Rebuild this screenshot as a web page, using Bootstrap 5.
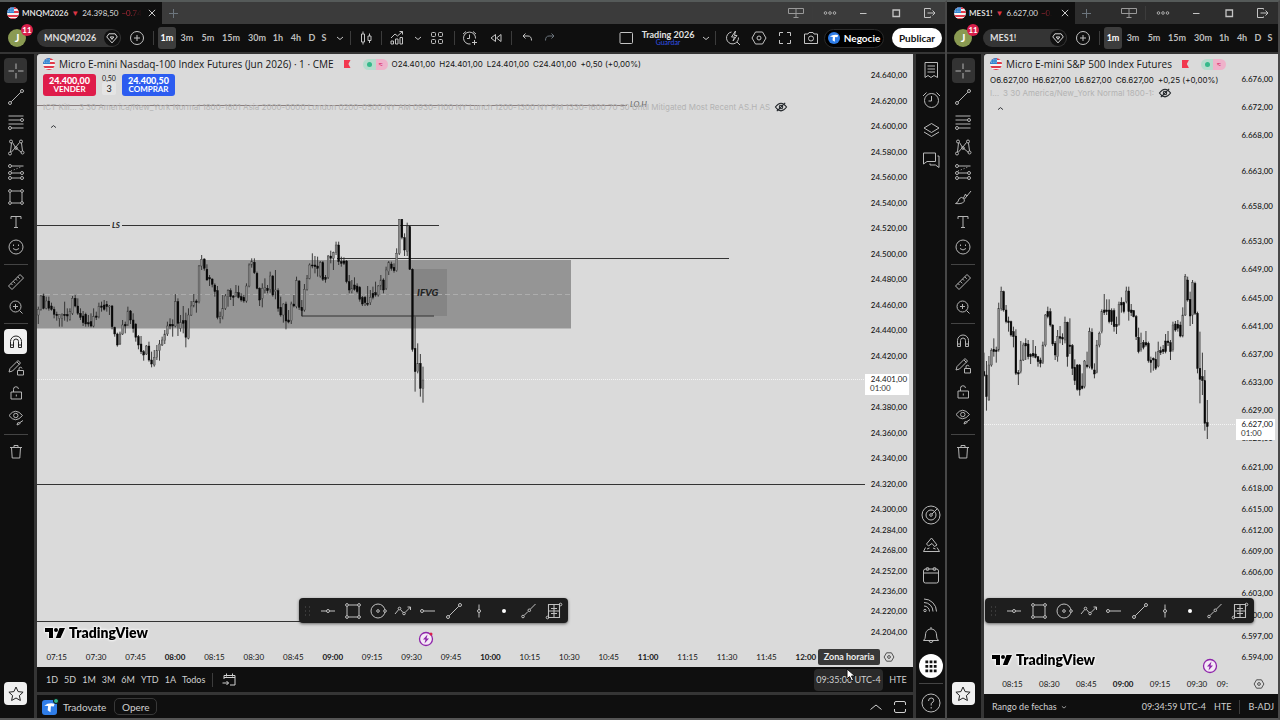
<!DOCTYPE html>
<html lang="es">
<head>
<meta charset="utf-8">
<meta name="viewport" content="width=device-width, initial-scale=1">
<title>MNQM2026 24.398,50</title>
<link href="https://cdn.jsdelivr.net/npm/bootstrap@5.3.0/dist/css/bootstrap.min.css" rel="stylesheet">
<style>
:root{--bg:#0f0f0f;--line:#353535;--ink:#c4c4c4;--paper:#dadada}
body{height:100vh;min-height:640px;background:var(--bg);color:var(--ink);font:8px/10px Lato,"Open Sans",sans-serif;overflow:hidden}
button{background:none;border:0;padding:0;color:inherit;font:inherit;display:flex;align-items:center;justify-content:center;flex-shrink:0}
svg{flex-shrink:0}
.ic{width:20px;height:20px;fill:none;stroke:currentColor;stroke-width:1}
.ic-s{width:14px;height:14px}
.caret{width:9px;height:9px;stroke-width:2}
.win-a{flex:948 1 0}
.win-b{flex:332 1 0}
.win{min-width:0;border-top:2px solid #555a59;border-right:2px solid #484848;border-bottom:2px solid #555}
.tabs{height:22px;background:#3b3b3b}
.win-b .tabs{background:#2d2d2d}
.tab-on{background:var(--bg);height:22px;padding:0 3px 0 7px;gap:3px;color:#ddd}
.win-a .tab-on{width:162px}
.win-b .tab-on{width:128px}
.fade-txt{color:#b02a37;white-space:nowrap;-webkit-mask-image:linear-gradient(90deg,#000 40%,transparent);mask-image:linear-gradient(90deg,#000 40%,transparent)}
.flag{width:12px;height:12px}
.tools{height:30px;border-bottom:2px solid var(--line);color:#c4c4c4;overflow:hidden}
.tools>*{flex-shrink:0}
.avatar{width:18px;height:18px;border-radius:50%;background:#8a9a52;color:#fff;font:bold 11px/18px Lato,sans-serif;text-align:center;margin:0 11px 0 8px}
.win-b .avatar{margin-left:7px}
.count{position:absolute;top:-5px;right:-7px;width:12px;height:12px;border-radius:6px;background:#d81f4b;font:bold 8px/12px Lato,sans-serif}
.pill{width:84px;height:18px;border-radius:9px;background:#343434;padding:0 1px 0 7px;color:#ddd;font-weight:700;font-size:9px}
.pill i{width:16px;height:16px;border-radius:50%;background:#111;display:grid;place-items:center}
.iv{height:22px;font-size:9px;font-weight:700;color:#bdbdbd}
.iv-on{background:#3d3d3d;border-radius:3px;color:#fff}
.w12{width:12px}.w16{width:16px}.w18{width:18px}.w20{width:20px}.w22{width:22px}.w26{width:26px}.w30{width:30px}.w32{width:32px}
.winctl button{width:33px}
.vr1{width:1px;height:14px;background:#3c3c3c}
.side{width:37px;padding:3px 3px 12px 0;border-right:3px solid var(--line);color:#b4b4b4;align-items:center}
.win-b .side{padding-left:1px}
.side hr,.rail hr{width:24px;margin:4px 0;border:0;height:1px;background:#444;opacity:1}
.side button{flex:1;width:23px;border-radius:4px}
.g8{height:203px}.g2{height:50px}.g4{height:102px}.g1{height:26px}
.side .sel{background:#333;margin:1px 0}
.side .lit{background:#f0f0f0;color:#222;margin:1px 0}
.side .star{flex:0 0 23px}
.pane{background:var(--paper);color:#151515;border-radius:3px 0 0 0;min-height:0}
.plot{min-width:0;overflow:hidden}
.plot>svg{position:absolute;inset:0;width:100%;height:100%}
.over{position:absolute;z-index:2}
.leg{left:6px;top:4px;white-space:nowrap}
.leg-title{font:10px/12px "Open Sans",sans-serif}
.leg-row{font:8px/12px Inter,sans-serif}
.flagsm{width:7px;height:8px;background:#f2384f;clip-path:polygon(0 0,100% 0,70% 50%,100% 100%,0 100%);margin:0 12px 0 10px}
.dots{width:25px;height:11px;border-radius:6px;background:linear-gradient(90deg,#b5dccd 50%,#efb2ca 50%);gap:6px;font-size:9px;line-height:9px;color:#d92f6e}
.dots i{width:5px;height:5px;border-radius:50%;background:#35b98a}
.deal{width:53px;height:22px;border-radius:3px;color:#fff;font-size:8px;line-height:9px;font-weight:700;flex-direction:column}
.deal b{font-size:9px}
.sell{background:#df1c4a}.buy{background:#2c5cf0}
.qty{width:14px;height:13px;border-radius:2px;background:#e4e4e4;font-size:9px;line-height:13px;text-align:center}
.ghost{color:#b3b3b3;font:8px/12px Inter,sans-serif}
.axis{width:48px;padding:16px 6px 10px 0;text-align:right;font-weight:500}
.win-b .axis{width:42px;padding:20px 5px 12px 0}
.axis div{display:flex;align-items:flex-end;justify-content:flex-end;flex-basis:0;min-height:0}
.axis div:first-child{flex-basis:10px}
.axis span{height:10px}
.now{background:#fff;right:4px;width:44px;height:21px;padding:1px 2px 0;text-align:right;line-height:9px;font-size:8px}
.now small{display:block;text-align:left;font-size:8px;color:#333;padding-left:3px}
.win-a .now{top:320px}
.win-b .now{top:365px;right:3px;width:39px}
.times{height:20px}
.times>div{display:grid;grid-auto-flow:column;grid-auto-columns:1fr;text-align:center}
.win-a .times>div{flex:1}
.win-a .times>button{width:48px}
.win-b .times>div{grid-template-columns:repeat(6,15%);grid-auto-columns:14px;padding-left:10px;flex:1}
.win-b .times>button{width:38px}
.float-bar{width:269px;height:25px;border-radius:4px;background:#1e1e1e;color:#c0c0c0;box-shadow:0 1px 3px #0008;padding-right:1px}
.win-a .float-bar{left:262px;bottom:24px}
.win-b .float-bar{left:1px;bottom:71px}
.float-bar button{flex:1}
.grip{width:16px;color:#555}
.logo{gap:4px;font:800 14px/16px Lato,sans-serif;color:#000;left:8px;bottom:6px;filter:drop-shadow(0 0 1px #fff) drop-shadow(0 0 1px #fff)}
.bolt{bottom:0;color:#8e24aa}
.win-a .bolt{left:381px}
.win-b .bolt{left:218px}
.foot{height:25px;font-size:9px;color:#d0d0d0;background:var(--bg)}
.win-b .foot{height:24px;padding-top:2px}
.acct{height:26px;border-top:3px solid var(--line);color:#d0d0d0;font-size:10px}
#ranges{padding-left:6px}
#ranges button{padding:0 3px}
.clock{height:22px;background:#2a2a2a;border-radius:4px;width:69px}
.rail{width:32px;border-left:3px solid var(--line);background:var(--bg);color:#bbb;align-items:center;padding-top:1px}
.rail button{height:30px;width:24px}
.rail .disc{background:#fff;color:#111;height:24px;border-radius:50%;margin:4px 0 1px}
.negocie{width:60px;height:19px;border-radius:10px;background:#000;border:1px solid #2b2b2b;color:#fff;font-weight:700;font-size:10px;gap:4px}
.publicar{width:50px;height:20px;border-radius:10px;background:#fff;color:#111;font-size:10px;font-weight:700;margin-right:3px}
.layout-name{width:58px;line-height:9px;font-size:9px;color:#e0e0e0}
.layout-name span{color:#2f4fe8;font-size:7px;line-height:7px}
.opere{width:43px;height:17px;border:1px solid #383838;border-radius:5px;font-size:10px}
.tip{background:#383838;color:#eee;font-weight:700;font-size:9px;border-radius:2px;width:62px;height:16px;line-height:16px;text-align:center;right:33px;bottom:2px}
.cursor{right:57px;bottom:-15px;z-index:5}
</style>
</head>
<body class="d-flex">
<svg width="0" height="0" class="position-absolute">
<defs>
<symbol id="cross" viewBox="0 0 20 20"><path d="M10 2.500v5.500M10 12v5.500M2.500 10H8M12 10h5.500"/></symbol>
<symbol id="trend" viewBox="0 0 20 20"><path d="M5.200 14.800l9.600-9.600"/><circle cx="4" cy="16" r="1.500"/><circle cx="16" cy="4" r="1.500"/></symbol>
<symbol id="fib" viewBox="0 0 20 20"><path d="M2.500 4h15M2.500 8h12M2.500 12h15M5.500 16h12"/><circle cx="16" cy="8" r="1.500"/><circle cx="4" cy="16" r="1.500"/></symbol>
<symbol id="xabcd" viewBox="0 0 20 20"><path d="M4.500 15l1-9M6.500 5.500l3 5 4-5M15.500 6l1 8M5.500 15l4-4.500 6 5"/><circle cx="5" cy="4.500" r="1.500"/><circle cx="15" cy="4.500" r="1.500"/><circle cx="4" cy="16.500" r="1.500"/><circle cx="10" cy="11" r="1.300"/><circle cx="16.500" cy="15.500" r="1.500"/></symbol>
<symbol id="forecast" viewBox="0 0 20 20"><path d="M5.500 4h12M5.500 11h9M5.500 16h9"/><path d="M5 9l10-4" stroke-dasharray="1 2"/><circle cx="4" cy="4" r="1.500"/><circle cx="4" cy="11" r="1.500"/><circle cx="4" cy="16" r="1.500"/><circle cx="16" cy="11" r="1.500"/><circle cx="16" cy="16" r="1.500"/></symbol>
<symbol id="rect" viewBox="0 0 20 20"><path d="M5.500 4h9M5.500 16h9M4 5.500v9M16 5.500v9"/><circle cx="4" cy="4" r="1.400"/><circle cx="16" cy="4" r="1.400"/><circle cx="4" cy="16" r="1.400"/><circle cx="16" cy="16" r="1.400"/></symbol>
<symbol id="tee" viewBox="0 0 20 20"><path d="M5 7V4.500h10V7M10 4.500v11M8 15.500h4"/></symbol>
<symbol id="smile" viewBox="0 0 20 20"><circle cx="10" cy="10" r="7"/><path d="M7 11.500q3 3 6 0M7.500 7.500v1.500M12.500 7.500v1.500"/></symbol>
<symbol id="ruler" viewBox="0 0 20 20"><path d="M2.500 14l11.500-11.500 3.500 3.500L6 17.500zM5 11.500l1.500 1.500M7.200 9.300l2 2M9.500 7l1.500 1.500M11.700 4.800l2 2"/></symbol>
<symbol id="zoomin" viewBox="0 0 20 20"><circle cx="9.500" cy="9.500" r="5.500"/><path d="M13.500 13.500l3 3M9.500 7v5M7 9.500h5"/></symbol>
<symbol id="magnet" viewBox="0 0 20 20"><path d="M4.500 15.500V9.500a5.500 5.500 0 0 1 11 0v6h-3V9.500a2.500 2.500 0 0 0-5 0v6zM4.500 13h3M12.500 13h3"/></symbol>
<symbol id="penlock" viewBox="0 0 20 20"><path d="M3 14l1-3.500 8-8 2.500 2.500-8 8zM11 4l2.500 2.500M11.500 12.500h6v4.500h-6zM13 12.500v-1.500a1.500 1.500 0 0 1 3-.5"/></symbol>
<symbol id="lock" viewBox="0 0 20 20"><path d="M5 9h10.500v7H5zM7.500 9V6.500a2.500 2.500 0 0 1 5-.5M10.300 11.500v2"/></symbol>
<symbol id="eye" viewBox="0 0 20 20"><path d="M3 7.500q6.500-8.500 13.500 0q-7 8.500-13.500 0z"/><circle cx="9.800" cy="7.500" r="2.200"/><path d="M11 17q0-3 2.500-2.500T11 17zM14 14.500l3-2"/></symbol>
<symbol id="trash" viewBox="0 0 20 20"><path d="M4 5.500h12M8 5.500V3.500h4v2M5.500 5.500l.7 10.500h7.600l.7-10.500"/></symbol>
<symbol id="star" viewBox="0 0 20 20"><path d="M10 3l2.100 4.600 5 .6-3.700 3.400 1 4.900-4.400-2.500-4.400 2.500 1-4.900L2.900 8.200l5-.6z"/></symbol>
<symbol id="brush" viewBox="0 0 20 20"><path d="M2.500 16.500q3-1 3.500-4.500 2-3 5-.5 1.500 3-1.500 4.500-3.500 1.200-7 .5zM10.500 11l2-4M11.500 12l6.500-8M12.500 7q0 2.500 2.500 1.500"/></symbol>
<symbol id="plus" viewBox="0 0 20 20"><path d="M10.500 6v9M6 10.500h9"/></symbol>
<symbol id="pluscircle" viewBox="0 0 20 20"><circle cx="10" cy="10" r="6.500"/><path d="M10 7v6M7 10h6"/></symbol>
<symbol id="chev" viewBox="0 0 20 20"><path d="M7 9l3 2.500L13 9"/></symbol>
<symbol id="chevup" viewBox="0 0 20 20"><path d="M4.500 12.500l5.500-4.500 5.500 4.500"/></symbol>
<symbol id="close" viewBox="0 0 20 20"><path d="M5.500 5.500l9 9M14.500 5.500l-9 9" stroke-width="1.300"/></symbol>
<symbol id="candle" viewBox="0 0 20 20"><path d="M5.500 6h3v8h-3zM7 3.500V6M7 14v2.500M12 8h3v4.500h-3zM13.500 5.500V8M13.500 12.500V15"/></symbol>
<symbol id="indic" viewBox="0 0 20 20"><path d="M4 16v-3h2.500v3zM8.500 16v-5H11v5zM13 16V9.500h2.500V16zM4 10l4-4 2.500 2L15.500 3.500M12.500 3.500h3v3"/></symbol>
<symbol id="four" viewBox="0 0 20 20"><rect x="4.500" y="4.500" width="4" height="4" rx="1"/><rect x="11.500" y="4.500" width="4" height="4" rx="1"/><rect x="4.500" y="11.500" width="4" height="4" rx="1"/><rect x="11.500" y="11.500" width="4" height="4" rx="1"/></symbol>
<symbol id="alarmplus" viewBox="0 0 20 20"><path d="M10.500 16A6 6 0 1 1 15.500 10.500M9.500 6.500V10.500H7M3 6l3-2.500M13 3.500L16 6M14.500 12v5M12 14.500h5"/></symbol>
<symbol id="rewind" viewBox="0 0 20 20"><path d="M9.500 6.500v7L5 10zM15 6.500v7L10.500 10z"/></symbol>
<symbol id="undo" viewBox="0 0 20 20"><path d="M8.500 5.500L6 8l2.500 2.500M6 8h5q3.500 0 3.500 4.500"/></symbol>
<symbol id="redo" viewBox="0 0 20 20"><path d="M11.500 5.500L14 8l-2.500 2.500M14 8H9q-3.500 0-3.500 4.500"/></symbol>
<symbol id="square" viewBox="0 0 20 20"><rect x="4" y="4.500" width="12.500" height="11" rx="1"/></symbol>
<symbol id="quick" viewBox="0 0 20 20"><path d="M8.500 4a6 6 0 1 0 7 5.500M14 14l3 3M12.500 3l-4 6h3L10 13l4-5.500h-2.500z"/></symbol>
<symbol id="hex" viewBox="0 0 20 20"><path d="M6.500 4h7L17 10l-3.500 6h-7L3 10z"/><circle cx="10" cy="10" r="2"/></symbol>
<symbol id="full" viewBox="0 0 20 20"><path d="M4.500 8V4.500H8M12 4.500h3.500V8M15.500 12v3.500H12M8 15.500H4.500V12"/></symbol>
<symbol id="expand" viewBox="0 0 20 20"><path d="M4.500 8V6q0-1.500 1.500-1.500h8q1.500 0 1.500 1.500v2M15.500 12v2q0 1.500-1.500 1.500H6q-1.500 0-1.500-1.500v-2"/></symbol>
<symbol id="camera" viewBox="0 0 20 20"><path d="M3.500 6h3.500l1-1.500h4L13 6h3.500v9.500h-13z"/><circle cx="10" cy="10.500" r="2.500"/></symbol>
<symbol id="screens" viewBox="0 0 20 20"><path d="M2.500 5.500h15v5h-15zM10 5.500v9M7.500 14.500h5" stroke="#999"/></symbol>
<symbol id="dots3" viewBox="0 0 20 20"><circle cx="5.500" cy="10" r="1.300" stroke-width=".8"/><circle cx="10" cy="10" r="1.300" stroke-width=".8"/><circle cx="14.500" cy="10" r="1.300" stroke-width=".8"/></symbol>
<symbol id="minw" viewBox="0 0 20 20"><path d="M7 10.500h6.500"/></symbol>
<symbol id="maxw" viewBox="0 0 20 20"><path d="M7 7h6.500v6.500H7z" stroke-width="1.300"/></symbol>
<symbol id="exit" viewBox="0 0 20 20"><path d="M11.500 6.500V5.500H5.500v9h6v-1M8.500 10H16M13.500 7.500l2.500 2.500-2.500 2.500"/></symbol>
<symbol id="badge" viewBox="0 0 20 20"><path d="M5.500 4h9l3 4.500-7.500 8.500-7.500-8.500zM7.500 8.500h5L10 12z" stroke-width="1.400"/></symbol>
<symbol id="list" viewBox="0 0 20 20"><path d="M4 2.500h12.500v15L13 15.500l-3 2-3-2-3 2zM6.500 6h7.500M6.500 9h7.500M6.500 12h7.500"/></symbol>
<symbol id="alarm" viewBox="0 0 20 20"><circle cx="10.500" cy="10.500" r="7"/><path d="M10.500 6v5H7.500M2 6l3.500-3.500M15.500 2.500L19 6"/></symbol>
<symbol id="layers" viewBox="0 0 20 20"><path d="M10.500 3.500L18 8l-7.500 4.500L3 8zM3 12l7.500 4.500L18 12"/></symbol>
<symbol id="chat" viewBox="0 0 20 20"><path d="M2.500 3h12v8.500H6L2.500 14zM16.500 6h1.500v11.500l-3.500-2.500H9v-1.500"/></symbol>
<symbol id="radar" viewBox="0 0 20 20"><circle cx="10" cy="10" r="9"/><circle cx="10" cy="10" r="5"/><circle cx="10" cy="10" r="1.300"/><path d="M11 9l5.500-5.500"/></symbol>
<symbol id="pyramid" viewBox="0 0 20 20"><path d="M5.500 9L10.500 3 16 10l-2.500 1.500L11 8.500 7.500 11zM4.500 12.500L2.500 16.500h16L16 12.500M6 14l2.500-1M12 13l2.500 1"/></symbol>
<symbol id="cal" viewBox="0 0 20 20"><rect x="2.500" y="4" width="15" height="14" rx="2"/><path d="M2.500 8h15"/><circle cx="6.500" cy="4" r="1.500"/><circle cx="13.500" cy="4" r="1.500"/></symbol>
<symbol id="waves" viewBox="0 0 20 20"><circle cx="4" cy="15.500" r="1.200"/><path d="M3 11a5.500 5.500 0 0 1 5.500 5.500M3 7.500a9 9 0 0 1 9 9M3 4a12.500 12.500 0 0 1 12.500 12.500"/></symbol>
<symbol id="bell" viewBox="0 0 20 20"><path d="M2.500 15.500h15q-2-1.500-2-5.500c0-8-11-8-11 0q0 4-2 5.500zM8 15.500a2 2 0 0 0 4 0M10 4V2"/></symbol>
<symbol id="nine" viewBox="0 0 20 20"><path d="M2 4h16M2 10.500h16M2 17h16" stroke-width="4" stroke-dasharray="4 2"/></symbol>
<symbol id="help" viewBox="0 0 20 20"><circle cx="10" cy="10" r="9"/><path d="M7.500 8q0-3 2.700-3t2.500 2.500q0 1.500-2.500 3v2M10.200 14v1.500"/></symbol>
<symbol id="hline" viewBox="0 0 20 20"><path d="M3 10h5.500M11.500 10H17"/><circle cx="10" cy="10" r="1.500"/></symbol>
<symbol id="circ" viewBox="0 0 20 20"><circle cx="10" cy="10" r="7"/><circle cx="10" cy="10" r="1.300"/><circle cx="17" cy="10" r="1.300" fill="#1e1e1e"/></symbol>
<symbol id="path" viewBox="0 0 20 20"><path d="M2 13l3.700-4.500M7.500 8.500l2.500 3M12 11.500L17.500 6M14.500 6h3v3"/><circle cx="6.500" cy="7.500" r="1.300"/><circle cx="11" cy="12.500" r="1.300"/></symbol>
<symbol id="ray" viewBox="0 0 20 20"><circle cx="4" cy="10" r="1.500"/><path d="M5.500 10H17"/></symbol>
<symbol id="vline" viewBox="0 0 20 20"><path d="M10 3.500v5M10 11.500v5"/><circle cx="10" cy="10" r="1.500"/></symbol>
<symbol id="dot" viewBox="0 0 20 20"><circle cx="10" cy="10" r="2" fill="#fff" stroke="none"/></symbol>
<symbol id="ext" viewBox="0 0 20 20"><path d="M5 14.500l4-4M11.500 8l5-5"/><circle cx="4" cy="15.500" r="1.300"/><circle cx="10.300" cy="9.300" r="1.300"/></symbol>
<symbol id="gridr" viewBox="0 0 20 20"><path d="M4.500 3.500h11v13h-11zM10 3.500v13M4.500 10h11M7 7.500h6M7 12.500h6" stroke-width="1.100"/><circle cx="16.500" cy="3.500" r="1.300"/><circle cx="3.500" cy="16.500" r="1.300"/></symbol>
<symbol id="gripd" viewBox="0 0 20 20"><path d="M8 6h5M8 10h5M8 14h5" stroke-width="1" stroke-dasharray="1 3"/></symbol>
<symbol id="goto" viewBox="0 0 20 20"><path d="M5 9V5.500h11v9.500h-5M5 7.500h11M7.500 3.500v3M13.500 3.500v3M3.500 13h6M7.500 11l2 2-2 2"/></symbol>
<symbol id="hidden" viewBox="0 0 20 20"><path d="M2 10q8-11 16 0q-8 11-16 0zM4 16L16 4" stroke-width="1.500"/><circle cx="10" cy="10" r="2.500" stroke-width="1.500"/></symbol>
<symbol id="flag" viewBox="0 0 12 12"><clipPath id="fc"><circle cx="6" cy="6" r="6"/></clipPath><g clip-path="url(#fc)" stroke="none"><path fill="#f3f3f3" d="M0 0h12v12H0z"/><path fill="#e0394a" d="M0 0h12v2H0zM0 4h12v2H0zM0 8h12v2H0zM0 11h12v1H0z"/><path fill="#2f83cf" d="M0 0h7v6H0z"/><path stroke="#cfe4f7" stroke-width=".6" stroke-dasharray=".8 1" d="M1 1.500h6M1 3h6M1 4.500h6"/></g></symbol>
<symbol id="tv" viewBox="0 0 20 12"><path stroke="none" fill="#000" d="M0 1h8v10H4V5H0zM14.500 1H20l-4.500 10h-4.700z"/><circle cx="11" cy="3" r="2" stroke="none" fill="#000"/></symbol>
<symbol id="tradov" viewBox="0 0 16 16"><path fill="#fff" stroke="none" d="M2.500 6Q7 2.500 13.500 4L12.500 7 9.500 6.700 9 13 6 11 6.500 6.500z"/></symbol>
<symbol id="flash" viewBox="0 0 16 16"><circle cx="8" cy="8" r="6.500" fill="#f4e8f6" stroke-width="1.300"/><path d="M9.500 3.500L5 8.500h2.500L6.500 12.500 11 7.500H8.500z" fill="currentColor" stroke="none"/></symbol>
</defs>
</svg>

<main class="win win-a d-flex flex-column">
  <header class="tabs d-flex align-items-center">
    <div class="tab-on d-flex align-items-center"><svg class="flag"><use href="#flag"/></svg><b>MNQM2026</b><span class="text-danger">▼</span><span>24.398,50</span><span class="fade-txt">−0.74</span><button class="ms-auto" aria-label="Cerrar"><svg class="ic ic-s"><use href="#close"/></svg></button></div>
    <button class="w22" aria-label="Nueva"><svg class="ic text-secondary"><use href="#plus"/></svg></button>
    <div class="ms-auto d-flex align-items-center winctl">
      <button><svg class="ic"><use href="#screens"/></svg></button><span class="vr1"></span><button><svg class="ic"><use href="#dots3"/></svg></button><button><svg class="ic"><use href="#minw"/></svg></button><button><svg class="ic"><use href="#maxw"/></svg></button><button><svg class="ic"><use href="#exit"/></svg></button>
    </div>
  </header>
  <nav class="tools d-flex align-items-center">
    <div class="avatar position-relative">J<span class="count">11</span></div>
    <button class="pill justify-content-between">MNQM2026<i><svg class="ic ic-s"><use href="#badge"/></svg></i></button>
    <button class="w32"><svg class="ic"><use href="#pluscircle"/></svg></button><span class="vr1 me-1"></span>
    <button class="iv iv-on w18">1m</button><button class="iv w22">3m</button><button class="iv w20">5m</button><button class="iv w26">15m</button><button class="iv w26">30m</button><button class="iv w16">1h</button><button class="iv w20">4h</button><button class="iv w12">D</button><button class="iv w12">S</button><button class="w20"><svg class="ic"><use href="#chev"/></svg></button>
    <span class="vr1"></span><button class="w30"><svg class="ic"><use href="#candle"/></svg></button><span class="vr1"></span><button class="w30"><svg class="ic"><use href="#indic"/></svg></button><button class="w12"><svg class="ic"><use href="#chev"/></svg></button><button class="w26"><svg class="ic"><use href="#four"/></svg></button><span class="vr1 ms-1"></span><button class="w30"><svg class="ic"><use href="#alarmplus"/></svg></button><button class="w22"><svg class="ic"><use href="#rewind"/></svg></button><span class="vr1 ms-1"></span><button class="w30"><svg class="ic"><use href="#undo"/></svg></button><button class="w16 text-secondary"><svg class="ic"><use href="#redo"/></svg></button>
    <div class="ms-auto d-flex align-items-center">
      <button class="w26"><svg class="ic"><use href="#square"/></svg></button>
      <button class="layout-name flex-column"><b>Trading 2026</b><span>Guardar</span></button>
      <button class="w18"><svg class="ic"><use href="#chev"/></svg></button><span class="vr1 me-1"></span>
      <button class="w26"><svg class="ic"><use href="#quick"/></svg></button><button class="w26"><svg class="ic"><use href="#hex"/></svg></button><button class="w26"><svg class="ic"><use href="#full"/></svg></button><button class="w26"><svg class="ic"><use href="#camera"/></svg></button>
      <button class="negocie me-2"><svg width="12" height="12" viewBox="0 0 16 16"><circle cx="8" cy="8" r="8" fill="#2f7de8"/><use href="#tradov"/></svg>Negocie</button>
      <button class="publicar">Publicar</button>
    </div>
  </nav>
  <div class="d-flex flex-grow-1" style="min-height:0">
    <aside class="side d-flex flex-column" data-tools="rect" data-magnet="lit"></aside>
    <section class="d-flex flex-column flex-grow-1" style="min-width:0">
      <div class="pane d-flex flex-column flex-grow-1 position-relative">
        <div class="d-flex flex-grow-1" style="min-height:0">
          <div class="plot flex-grow-1 position-relative">
            <svg><g transform="translate(-37 -54)">
              <path stroke="#8a7f7f" d="M37 105.500h590"/>
              <path fill="#959595" d="M37 260h534v68.500H37z"/>
              <path fill="#858585" d="M413 269h34v47h-34z"/>
              <path stroke="#adadad" stroke-dasharray="5 3" d="M37 294.500h534"/>
              <path stroke="#333" fill="none" d="M37 225.500h73M122 225.500h317M337 258.500h392M302 310v6.500M302 316h132M37 484.500h829M37 621.500h270"/>
              <path stroke="#f4f4f4" stroke-dasharray="1 1" d="M37 379.500h829"/>
              <g id="candlesA"></g>
              <g font-style="italic" fill="#222"><text x="112" y="228" font-size="8" font-weight="bold">LS</text><text x="630" y="107" font-size="8" fill="#666">LO.H</text><text x="417" y="296" font-size="10" font-weight="900">IFVG</text></g>
            </g></svg>
            <div class="over leg">
              <div class="d-flex align-items-center"><svg class="flag me-1"><use href="#flag"/></svg><span class="leg-title">Micro E-mini Nasdaq-100 Index Futures (Jun 2026) · 1 · CME</span><span class="flagsm"></span><span class="dots d-flex align-items-center justify-content-center"><i></i>≈</span><span class="leg-row ms-1">O24.401,00&ensp;H24.401,00&ensp;L24.401,00&ensp;C24.401,00&ensp;+0,50 (+0,00%)</span></div>
              <div class="d-flex pt-1"><button class="deal sell"><b>24.400,00</b>VENDER</button><div class="w26 d-flex flex-column align-items-center" style="line-height:8px"><small style="font-size:7px">0,50</small><span class="qty">3</span></div><button class="deal buy"><b>24.400,50</b>COMPRAR</button></div>
              <div class="ghost d-flex align-items-center pt-1"><span>ICT Kill… 3 30 America/New_York Normal 1800-1801 Asia 2000-0000 London 0200-0500 NY AM 0930-1100 NY Lunch 1200-1300 NY PM 1330-1600 70 50 Until Mitigated Most Recent AS.H AS</span><svg class="ic ic-s text-dark ms-1"><use href="#hidden"/></svg></div>
              <button class="w20 text-dark mt-2"><svg class="ic caret"><use href="#chevup"/></svg></button>
            </div>
            <div class="over logo d-flex align-items-center"><svg width="20" height="12"><use href="#tv"/></svg>TradingView</div>
            <div class="over bolt"><svg class="ic" style="width:16px;height:16px"><use href="#flash"/><circle cx="13" cy="3" r="1.500" fill="#d81f4b" stroke="none"/></svg></div>
            <div class="over float-bar d-flex align-items-center"></div>
          </div>
          <div class="axis d-flex flex-column" data-prices="640 620 600 580 560 540 520 500 480 460 440 420 380 360 340 320 300 284 268 252 236 220 204" data-pre="24."></div>
        </div>
        <div class="over now">24.401,00<small>01:00</small></div>
        <div class="times d-flex align-items-center"><div data-times="07:15 07:30 07:45 08:00 08:15 08:30 08:45 09:00 09:15 09:30 09:45 10:00 10:15 10:30 10:45 11:00 11:15 11:30 11:45 12:00 _"></div><button aria-label="Ajustes"><svg class="ic ic-s"><use href="#hex"/></svg></button></div>
        <div class="over tip">Zona horaria</div>
        <svg class="over cursor" width="10" height="14" viewBox="0 0 10 14"><path d="M1 1v10l2.500-2.500L5.500 13l2-1-2-4H9z" fill="#fff" stroke="#111"/></svg>
      </div>
      <div class="foot d-flex align-items-center">
        <div class="d-flex align-items-center" id="ranges"></div>
        <span class="vr1 ms-1"></span><button class="w32"><svg class="ic"><use href="#goto"/></svg></button>
        <button class="clock ms-auto">09:35:00 UTC-4</button><button class="w30">HTE</button>
      </div>
      <div class="acct d-flex align-items-center ps-1">
        <svg width="18" height="18" viewBox="0 0 18 18"><rect x="1" y="2" width="15" height="15" rx="3" fill="#2f7de8"/><use href="#tradov" x="1" y="2" width="15" height="15"/><circle cx="15" cy="3" r="2.500" fill="#2fb38a" stroke="#0f0f0f"/></svg>
        <span class="ms-1 me-2">Tradovate</span><button class="opere">Opere</button>
        <button class="ms-auto w22"><svg class="ic"><use href="#chevup"/></svg></button><button class="w26"><svg class="ic"><use href="#expand"/></svg></button>
      </div>
    </section>
    <aside class="rail d-flex flex-column">
      <button><svg class="ic"><use href="#list"/></svg></button><button><svg class="ic"><use href="#alarm"/></svg></button><button><svg class="ic"><use href="#layers"/></svg></button><button><svg class="ic"><use href="#chat"/></svg></button>
      <button class="mt-auto"><svg class="ic"><use href="#radar"/></svg></button><button><svg class="ic"><use href="#pyramid"/></svg></button><button><svg class="ic"><use href="#cal"/></svg></button><button><svg class="ic"><use href="#waves"/></svg></button><button><svg class="ic"><use href="#bell"/></svg></button><button class="disc"><svg class="ic ic-s"><use href="#nine"/></svg></button><hr><button><svg class="ic"><use href="#help"/></svg></button>
    </aside>
  </div>
</main>

<main class="win win-b d-flex flex-column">
  <header class="tabs d-flex align-items-center">
    <div class="tab-on d-flex align-items-center"><svg class="flag"><use href="#flag"/></svg><b>MES1!</b><span class="text-danger">▼</span><span>6.627,00</span><span class="fade-txt">−0.</span><button class="ms-auto" aria-label="Cerrar"><svg class="ic ic-s"><use href="#close"/></svg></button></div>
    <button class="w22" aria-label="Nueva"><svg class="ic text-secondary"><use href="#plus"/></svg></button>
    <div class="ms-auto d-flex align-items-center winctl">
      <button><svg class="ic"><use href="#screens"/></svg></button><span class="vr1"></span><button><svg class="ic"><use href="#dots3"/></svg></button><button><svg class="ic"><use href="#minw"/></svg></button><button><svg class="ic"><use href="#maxw"/></svg></button><button><svg class="ic"><use href="#exit"/></svg></button>
    </div>
  </header>
  <nav class="tools d-flex align-items-center">
    <div class="avatar position-relative">J<span class="count">11</span></div>
    <button class="pill justify-content-between">MES1!<i><svg class="ic ic-s"><use href="#badge"/></svg></i></button>
    <button class="w32"><svg class="ic"><use href="#pluscircle"/></svg></button><span class="vr1 me-1"></span>
    <button class="iv iv-on w18">1m</button><button class="iv w22">3m</button><button class="iv w20">5m</button><button class="iv w26">15m</button><button class="iv w26">30m</button><button class="iv w16">1h</button><button class="iv w20">4h</button><button class="iv w12">D</button><button class="iv w12">S</button>
  </nav>
  <div class="d-flex flex-grow-1" style="min-height:0">
    <aside class="side d-flex flex-column" data-tools="brush"></aside>
    <section class="d-flex flex-column flex-grow-1" style="min-width:0">
      <div class="pane d-flex flex-column flex-grow-1 position-relative">
        <div class="d-flex flex-grow-1" style="min-height:0">
          <div class="plot flex-grow-1 position-relative">
            <svg><g transform="translate(-984 -54)"><path stroke="#f4f4f4" stroke-dasharray="1 1" d="M984 424.500h252"/><g id="candlesB"></g></g></svg>
            <div class="over leg">
              <div class="d-flex align-items-center"><svg class="flag me-1"><use href="#flag"/></svg><span class="leg-title">Micro E-mini S&amp;P 500 Index Futures</span><span class="flagsm"></span><span class="dots d-flex align-items-center justify-content-center"><i></i>≈</span></div>
              <div class="leg-row mt-1">O6.627,00&ensp;H6.627,00&ensp;L6.627,00&ensp;C6.627,00&ensp;+0,25 (+0,00%)</div>
              <div class="ghost d-flex align-items-center"><span>I…&ensp;3 30 America/New_York Normal 1800-1:</span><svg class="ic ic-s text-dark ms-1"><use href="#hidden"/></svg></div>
              <button class="w20 text-dark mt-1"><svg class="ic caret"><use href="#chevup"/></svg></button>
            </div>
            <div class="over logo d-flex align-items-center"><svg width="20" height="12"><use href="#tv"/></svg>TradingView</div>
            <div class="over bolt"><svg class="ic" style="width:16px;height:16px"><use href="#flash"/></svg></div>
          </div>
          <div class="axis d-flex flex-column" data-prices="676 672 668 663 658 653 649 645 641 637 633 629 625 621 618 615 612 609 606 603 600 597 594" data-pre="6."></div>
        </div>
        <div class="over float-bar d-flex align-items-center"></div>
        <div class="over now">6.627,00<small>01:00</small></div>
        <div class="times d-flex align-items-center"><div data-times="08:15 08:30 08:45 09:00 09:15 09:30 09:"></div><button aria-label="Ajustes"><svg class="ic ic-s"><use href="#hex"/></svg></button></div>
      </div>
      <div class="foot d-flex align-items-center ps-2">
        <button>Rango de fechas<svg class="ic ic-s"><use href="#chev"/></svg></button>
        <button class="ms-auto me-2">09:34:59 UTC-4</button><button class="me-2">HTE</button><span class="vr1 me-2"></span><button class="me-1">B-ADJ</button>
      </div>
    </section>
  </div>
</main>

<script>
const icon = n => `<svg class="ic"><use href="#${n}"/></svg>`;
const btn = (n, c = '') => `<button class="${c}" aria-label="${n}">${icon(n)}</button>`;

document.querySelectorAll('.side').forEach(s => {
  const group = (c, list) => `<div class="${c} d-flex flex-column">${list}</div>`;
  s.innerHTML =
    group('g8', btn('cross', 'sel') + ['trend', 'fib', 'xabcd', 'forecast', s.dataset.tools, 'tee', 'smile'].map(n => btn(n)).join('')) + '<hr>' +
    group('g2', btn('ruler') + btn('zoomin')) + '<hr>' +
    group('g4', btn('magnet', s.dataset.magnet || '') + btn('penlock') + btn('lock') + btn('eye')) + '<hr>' +
    group('g1', btn('trash')) + btn('star', 'star lit mt-auto');
});

document.querySelectorAll('.float-bar').forEach(b => {
  b.innerHTML = `<span class="grip d-flex justify-content-center">${icon('gripd')}</span>` +
    ['hline', 'rect', 'circ', 'path', 'ray', 'trend', 'vline', 'dot', 'ext', 'gridr'].map(n => btn(n)).join('');
});

// Each label's share of the column is its price distance from the label above.
document.querySelectorAll('[data-prices]').forEach(a => {
  const p = a.dataset.prices.split(' ').map(Number);
  a.innerHTML = p.map((v, i) => `<div style="flex-grow:${i ? p[i - 1] - v : 0}"><span>${a.dataset.pre}${v},00</span></div>`).join('');
});

document.querySelectorAll('[data-times]').forEach(t => {
  t.innerHTML = t.dataset.times.split(' ').map(v => v === '_' ? '<span></span>' : v.endsWith(':00') ? `<b>${v}</b>` : `<span>${v}</span>`).join('');
});

ranges.innerHTML = ['1D', '5D', '1M', '3M', '6M', 'YTD', '1A', 'Todos'].map(r => `<button>${r}</button>`).join('');

// Candles: high, body top, body bottom, low in thirds of a pixel below the data origin; a trailing "u" marks a rising bar.
const A = `320,328,345,372u 285,288,328,332u 281,288,325,328 290,303,325,328u 290,303,325,332 308,318,328,332 320,328,343,355 335,343,347,362 342,343,355,380u 340,345,355,380u 305,343,347,362 325,343,348,365 325,335,358,362u 288,295,340,345u 285,295,318,322 295,318,340,345 325,340,352,360 333,348,368,378 338,343,372,380 345,368,372,380 340,365,378,382 325,350,378,382u 335,348,352,360 308,320,350,355u 305,318,322,335 300,315,328,332 303,313,320,335 315,318,320,345u 315,318,380,388 380,382,402,410 398,402,435,440 395,402,432,435u 360,375,402,405u 365,373,378,400 320,333,373,378u 330,333,360,372 340,360,385,398 370,372,412,425 405,410,435,448 408,432,455,462 450,455,465,482 435,438,462,465u 425,438,480,485 455,480,492,502 450,472,495,500u 435,452,472,480u 420,432,452,482u 410,420,435,438u 390,402,422,432u 365,378,402,408u 355,373,378,388 358,373,378,410 282,305,378,382u 295,305,370,408 345,368,385,395u 318,362,370,400 338,362,412,442 325,345,415,418u 303,318,345,348u 282,305,318,322u 298,303,308,338 195,198,305,310u 165,178,198,210u 175,177,205,212 193,208,240,242 225,233,237,258 235,237,253,262 250,255,275,290 258,272,352,358 335,350,355,370u 285,325,350,358u 282,288,325,330u 268,272,290,320u 265,272,290,300 285,288,292,318 255,278,288,290u 257,278,292,295 280,290,300,305 285,292,303,308 250,258,303,308u 190,195,258,262u 175,185,195,203u 175,187,218,222 215,220,265,268 262,265,300,318 250,265,295,322u 235,262,270,280u 255,265,272,280 215,228,268,278u 225,228,285,290 210,270,275,298u 265,272,325,335 290,322,345,350 310,312,345,368u 305,312,363,388 330,360,366,370 305,312,362,372u 285,312,318,322 230,242,320,325u 240,243,322,330 300,322,332,348 252,268,330,335u 225,235,268,272u 190,195,235,238u 160,195,198,205 168,195,200,220 170,198,205,230 183,188,228,233u 183,188,238,243 225,232,238,248 165,168,232,237u 152,168,175,190 155,158,175,210u 125,135,158,165u 125,135,185,195 170,185,190,200 172,183,190,195 180,183,245,250 225,245,270,280 240,265,275,280u 232,255,268,272 250,258,275,280 258,262,298,305 288,293,312,318 288,292,308,318 258,310,312,318 270,292,308,315u 260,280,292,298 245,278,285,290 255,258,285,290u 225,240,258,270u 235,240,270,280 200,210,265,270u 183,188,215,225u 185,192,205,212 190,202,212,218 145,160,212,215u 57,58,160,165u 57,58,112,118 100,113,150,168 68,78,155,168u 75,80,208,210 205,208,448,455 350,445,515,575 430,490,515,520u 462,490,565,590 500,540,565,608u`;
const B = `278,335,347,350 303,345,410,452 288,315,420,422u 265,272,315,320u 235,268,275,290 260,270,275,308 128,145,270,275u 80,95,145,152u 92,95,150,155 135,150,185,190 170,183,188,215 182,185,225,230 200,215,230,262 208,228,340,345 330,338,342,375 243,300,335,340u 248,255,300,303u 235,250,258,300 240,252,290,298 280,283,290,312 240,280,288,293 258,282,292,295 290,290,305,320 293,300,310,322 245,255,308,312u 162,165,255,260u 140,155,170,175 145,155,195,200 193,195,252,258 243,250,285,300 210,230,290,305u 198,230,235,250 220,232,237,255 170,187,240,250u 185,187,290,320 175,255,260,282 252,257,325,345 298,322,362,375 312,315,388,392 312,315,390,407 340,378,385,388 300,303,380,385u 275,315,320,325 203,215,320,325u 205,217,325,330 310,330,342,355 240,255,338,340u 215,220,255,262u 148,155,215,220u 102,150,158,165 118,150,155,165 118,150,185,190 145,152,185,195 145,152,200,215 170,193,200,222 125,133,193,197u 112,128,135,158 125,128,155,160 80,93,125,130u 80,93,155,182 132,150,158,168 150,152,170,172 165,170,230,240 203,232,275,280 218,250,268,275u 240,248,262,268 213,248,255,260 245,250,302,308 290,300,308,338 292,295,300,332 275,298,325,330 245,275,318,322u 260,272,278,285 255,268,275,282 222,243,275,280 213,243,248,258 240,248,275,300 185,195,268,275u 183,192,210,215 180,193,205,215 185,195,228,232 142,165,228,232u 42,50,165,168u 50,60,120,125 95,118,168,198 60,68,165,192u 65,70,160,165 155,160,325,340 215,325,358,430 278,350,362,405 330,362,490,512 420,488,500,537`;
function draw(g, src, x0, x1, y0) {
  const rows = src.split(' ');
  g.innerHTML = rows.map((r, i) => {
    const up = r.endsWith('u'), [h, t, b, l] = r.replace('u', '').split(',').map(v => y0 + v / 3);
    const x = x0 + (x1 - x0) * i / (rows.length - 1);
    return `<path stroke="#2a2a2a" stroke-width=".9" d="M${x} ${h}V${l}"/><rect x="${x - .9}" y="${t}" width="1.800" height="${Math.max(1, b - t)}" fill="${up ? '#8a8a8a' : '#080808'}" stroke="${up ? '#3a3a3a' : '#080808'}" stroke-width=".4"/>`;
  }).join('');
}
draw(candlesA, A, 38.3, 423, 200);
draw(candlesB, B, 984, 1207.3, 260);
</script>
<script src="https://cdn.jsdelivr.net/npm/bootstrap@5.3.0/dist/js/bootstrap.bundle.min.js"></script>
</body>
</html>
